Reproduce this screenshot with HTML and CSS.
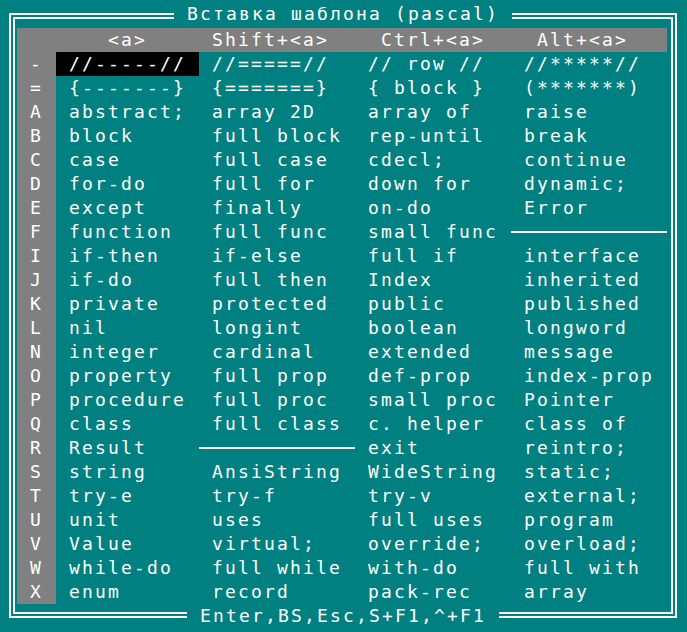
FILE: index.html
```html
<!DOCTYPE html>
<html lang="ru">
<head>
<meta charset="utf-8">
<title>Вставка шаблона (pascal)</title>
<link rel="stylesheet" href="styles.css">
</head>
<body>
<div class="frame">
  <div class="title"><span class="label"> Вставка шаблона (pascal) </span></div>
  <div class="table">
    <div class="row head">
      <div class="key"></div>
      <div class="hd p4">&lt;a&gt;</div>
      <div class="hd p1">Shift+&lt;a&gt;</div>
      <div class="hd p2">Ctrl+&lt;a&gt;</div>
      <div class="hd p2">Alt+&lt;a&gt;</div>
    </div>
    <div class="row"><div class="key">-</div><div class="c sel">//-----//</div><div class="c">//=====//</div><div class="c">// row //</div><div class="c">//*****//</div></div>
    <div class="row"><div class="key">=</div><div class="c">{-------}</div><div class="c">{=======}</div><div class="c">{ block }</div><div class="c">(*******)</div></div>
    <div class="row"><div class="key">A</div><div class="c">abstract;</div><div class="c">array 2D</div><div class="c">array of</div><div class="c">raise</div></div>
    <div class="row"><div class="key">B</div><div class="c">block</div><div class="c">full block</div><div class="c">rep-until</div><div class="c">break</div></div>
    <div class="row"><div class="key">C</div><div class="c">case</div><div class="c">full case</div><div class="c">cdecl;</div><div class="c">continue</div></div>
    <div class="row"><div class="key">D</div><div class="c">for-do</div><div class="c">full for</div><div class="c">down for</div><div class="c">dynamic;</div></div>
    <div class="row"><div class="key">E</div><div class="c">except</div><div class="c">finally</div><div class="c">on-do</div><div class="c">Error</div></div>
    <div class="row"><div class="key">F</div><div class="c">function</div><div class="c">full func</div><div class="c">small func</div><div class="sep"></div></div>
    <div class="row"><div class="key">I</div><div class="c">if-then</div><div class="c">if-else</div><div class="c">full if</div><div class="c">interface</div></div>
    <div class="row"><div class="key">J</div><div class="c">if-do</div><div class="c">full then</div><div class="c">Index</div><div class="c">inherited</div></div>
    <div class="row"><div class="key">K</div><div class="c">private</div><div class="c">protected</div><div class="c">public</div><div class="c">published</div></div>
    <div class="row"><div class="key">L</div><div class="c">nil</div><div class="c">longint</div><div class="c">boolean</div><div class="c">longword</div></div>
    <div class="row"><div class="key">N</div><div class="c">integer</div><div class="c">cardinal</div><div class="c">extended</div><div class="c">message</div></div>
    <div class="row"><div class="key">O</div><div class="c">property</div><div class="c">full prop</div><div class="c">def-prop</div><div class="c">index-prop</div></div>
    <div class="row"><div class="key">P</div><div class="c">procedure</div><div class="c">full proc</div><div class="c">small proc</div><div class="c">Pointer</div></div>
    <div class="row"><div class="key">Q</div><div class="c">class</div><div class="c">full class</div><div class="c">c. helper</div><div class="c">class of</div></div>
    <div class="row"><div class="key">R</div><div class="c">Result</div><div class="sep"></div><div class="c">exit</div><div class="c">reintro;</div></div>
    <div class="row"><div class="key">S</div><div class="c">string</div><div class="c">AnsiString</div><div class="c">WideString</div><div class="c">static;</div></div>
    <div class="row"><div class="key">T</div><div class="c">try-e</div><div class="c">try-f</div><div class="c">try-v</div><div class="c">external;</div></div>
    <div class="row"><div class="key">U</div><div class="c">unit</div><div class="c">uses</div><div class="c">full uses</div><div class="c">program</div></div>
    <div class="row"><div class="key">V</div><div class="c">Value</div><div class="c">virtual;</div><div class="c">override;</div><div class="c">overload;</div></div>
    <div class="row"><div class="key">W</div><div class="c">while-do</div><div class="c">full while</div><div class="c">with-do</div><div class="c">full with</div></div>
    <div class="row"><div class="key">X</div><div class="c">enum</div><div class="c">record</div><div class="c">pack-rec</div><div class="c">array</div></div>
  </div>
  <div class="footer"><span class="label"> Enter,BS,Esc,S+F1,^+F1 </span></div>
</div>
</body>
</html>
```

FILE: styles.css
```css
html, body {
  margin: 0;
  padding: 0;
}

body {
  width: 687px;
  height: 632px;
  overflow: hidden;
  background: #008080;
  color: #ffffff;
  font-family: "DejaVu Sans Mono", monospace;
  font-size: 18px;
  line-height: 24px;
  letter-spacing: 2.163px;
}

.frame {
  position: relative;
  box-sizing: border-box;
  width: 668px;
  height: 605px;
  margin: 0 0 0 9px;
  top: 13px;
  padding: 9px 4px 8px 2px;
  border: 6px double #ffffff;
}

.title,
.footer {
  position: absolute;
  left: 0;
  right: 0;
  display: flex;
  justify-content: center;
  height: 24px;
}

.title {
  top: -17px;
}

.footer {
  bottom: -16px;
}

.label {
  background: #008080;
  white-space: pre;
}

.table {
  display: flex;
  flex-direction: column;
  width: 650px;
}

.row {
  display: grid;
  grid-template-columns: 39px 143px 156px 156px 156px;
  height: 24px;
}

.key,
.hd,
.c {
  white-space: pre;
}

.key {
  background: #808080;
  padding-left: 13px;
}

.head .hd {
  background: #808080;
}

.p1 { padding-left: 13px; }
.p2 { padding-left: 26px; }
.p4 { padding-left: 52px; }

.c {
  padding-left: 13px;
}

.sel {
  background: #000000;
}

.sep {
  display: flex;
  align-items: center;
}

.sep::before {
  content: "";
  flex: 1;
  height: 2px;
  background: #ffffff;
}
```
